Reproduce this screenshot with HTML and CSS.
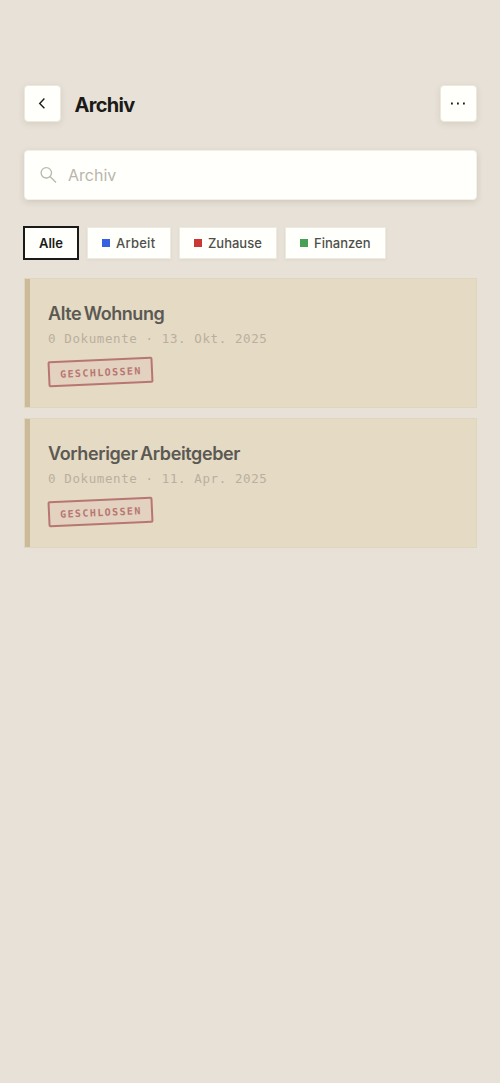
FILE: index.html
```html
<!DOCTYPE html>
<html lang="de">
<head>
<meta charset="utf-8">
<title>Archiv</title>
<link rel="stylesheet" href="styles.css">
</head>
<body>
<main class="screen">
  <header class="header">
    <button class="square" aria-label="Zurück"><svg width="35" height="35" viewBox="0 0 35 35"><path d="M19.4 12.4 14.7 17.4l4.7 4.9" fill="none" stroke="#1c1c1a" stroke-width="1.4"/></svg></button>
    <h1 class="heading">Archiv</h1>
    <button class="square" aria-label="Mehr"><svg width="35" height="35" viewBox="0 0 35 35" fill="#1c1c1a"><path d="M10 16.6h1.8v1.8H10zM16 16.6h1.8v1.8H16zM22 16.6h1.8v1.8H22z"/></svg></button>
  </header>
  <div class="search">
    <svg width="18" height="18" viewBox="0 0 18 18" fill="none" stroke="#bab7aa" stroke-width="1.3"><circle cx="6.3" cy="6.8" r="5.2"/><path d="m10 10.5 6 6"/></svg>
    <span class="placeholder">Archiv</span>
  </div>
  <nav class="filters">
    <button class="chip active"><span class="all">Alle</span></button>
    <button class="chip work"><i class="dot blue"></i><span class="t-work">Arbeit</span></button>
    <button class="chip home"><i class="dot red"></i><span class="t-home">Zuhause</span></button>
    <button class="chip finance"><i class="dot green"></i><span class="t-finance">Finanzen</span></button>
  </nav>
  <section class="list">
    <article class="card">
      <h2 class="title t-flat">Alte Wohnung</h2>
      <p class="meta">0 Dokumente · 13. Okt. 2025</p>
      <span class="stamp">GESCHLOSSEN</span>
    </article>
    <article class="card">
      <h2 class="title t-job">Vorheriger Arbeitgeber</h2>
      <p class="meta">0 Dokumente · 11. Apr. 2025</p>
      <span class="stamp">GESCHLOSSEN</span>
    </article>
  </section>
</main>
</body>
</html>
```
FILE: styles.css
```css
* { box-sizing: border-box; }
body { margin: 0; background: #e8e1d8; font-family: Inter, "Liberation Sans", sans-serif; color: #1a1a18; }
.screen { min-height: 1083px; padding: 85px 23.5px 0; }
button { font: inherit; color: inherit; margin: 0; padding: 0; border: 0; }
.header { display: flex; align-items: center; height: 37px; }
.square { display: flex; flex: none; width: 37px; height: 37px; border: 1px solid #ece8dc; border-radius: 4px; background: #fffffc; box-shadow: 0 2px 6px rgba(90, 85, 55, .13); }
.heading { flex: 1; margin: 2px 0 0 14px; font-size: 20px; line-height: 26px; font-weight: 700; letter-spacing: -.7px; }
.search { display: flex; align-items: center; gap: 10px; height: 50px; margin-top: 28px; padding: 0 16px 0 15.5px; border: 1px solid #f2f0e8; border-radius: 4px; background: #fffffc; box-shadow: 0 2px 6px rgba(90, 80, 50, .17); }
.placeholder { font-size: 16px; line-height: 22px; letter-spacing: 0; color: #b9b6ab; }
.filters { display: flex; align-items: center; margin: 25px 0 0 -.5px; height: 35px; }
.chip { display: flex; align-items: center; gap: 6px; height: 32px; padding-left: 14px; border: 1px solid #edeadf; background: #fffffc; box-shadow: 0 1px 3px rgba(90, 80, 50, .07); font-size: 13px; font-weight: 500; color: #4f4f4b; white-space: nowrap; }
.active { width: 56px; height: 34px; border: 2px solid #1a1a18; font-weight: 600; color: #1a1a18; box-shadow: none; }
.work { width: 84px; margin-left: 8px; }
.t-work { letter-spacing: .25px; }
.home { width: 98px; margin-left: 8px; }
.finance { width: 101px; margin-left: 8px; }
.dot { flex: none; width: 8px; height: 8px; }
.blue { background: #3562e3; }
.red { background: #c93832; }
.green { background: #48a056; }
.list { display: flex; flex-direction: column; gap: 9.5px; margin-top: 18px; }
.card { height: 130px; border: 1px solid #e0d5bd; padding: 23px 20px 0 23.5px; background: linear-gradient(90deg, #cbbb9a 5px, #e5dac3 5px); }
.title { margin: 0; font-size: 18px; line-height: 24px; font-weight: 600; letter-spacing: -.45px; word-spacing: -1.5px; color: #5b5953; white-space: nowrap; }
.t-job { letter-spacing: -.38px; }
.meta { margin: 4px 0 0; font-family: "DejaVu Sans Mono", "Liberation Mono", monospace; font-size: 12.5px; line-height: 18px; letter-spacing: .6px; color: #b9afa0; white-space: pre; }
.stamp { display: flex; align-items: center; width: 105px; height: 26px; margin-top: 11px; padding-left: 10px; border: 2px solid #b87672; border-radius: 2px; background: #e3d2bf; color: #b87672; font-family: "DejaVu Sans Mono", "Liberation Mono", monospace; font-size: 10px; font-weight: 700; letter-spacing: 1.42px; white-space: nowrap; transform: rotate(-2.5deg); }
```
